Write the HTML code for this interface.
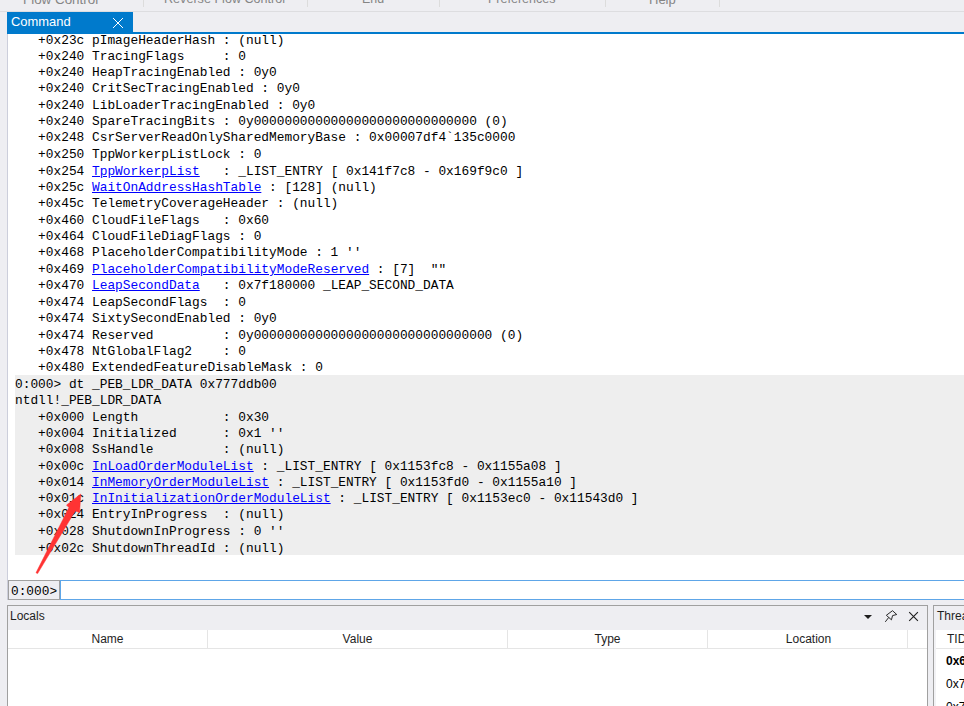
<!DOCTYPE html>
<html><head><meta charset="utf-8">
<style>
*{margin:0;padding:0;box-sizing:border-box}
html,body{width:964px;height:706px;overflow:hidden;background:#EEEEF2;position:relative;font-family:"Liberation Sans",sans-serif}
.abs{position:absolute}
.menu{font-size:13px;color:#858585;white-space:nowrap}
.msep{position:absolute;top:0;width:1px;height:7px;background:#DCDCDC}
#mline{left:0;top:11px;width:964px;height:1px;background:#DDDDE0}
#tab{left:7px;top:12px;width:126px;height:22px;background:#007ACC}
#tabtxt{left:11px;top:14px;color:#fff;font-size:12.95px}
#tabline{left:7px;top:32px;width:957px;height:2px;background:#007ACC}
#cmd{left:7px;top:34px;width:957px;height:566px;background:#fff;border-left:1px solid #CCCEDB}
#hl{left:15px;top:375px;width:949px;height:180px;background:#EEEEEE}
#out{left:15px;top:32px;font-family:"Liberation Mono",monospace;font-size:12.834px;line-height:16px;white-space:pre;color:#000}
.ln{position:absolute;left:0;white-space:pre}
#out a{color:#0000FF;text-decoration:underline}
#pr{left:8px;top:580px;width:52px;height:20px;background:#EEEEF2;border:1px solid #A0A0A0;font-family:"Liberation Mono",monospace;font-size:12.8px;line-height:22px;padding-left:2px;color:#000}
#inp{left:60px;top:580px;width:904px;height:20px;background:#fff;border:1px solid #5EA6E8;border-right:none}
#loc{left:7px;top:605px;width:921px;height:101px;background:#fff;border:1px solid #A0A0A0;border-bottom:none}
#lochd{left:0;top:0;width:919px;height:24px;background:#EEEEF2}
#loctxt{left:2px;top:3px;font-size:12px;color:#1E1E1E}
#colhd{left:0;top:24px;width:919px;height:19px;border-bottom:1px solid #E5E5E5}
.col{position:absolute;top:0;height:18px;font-size:12px;color:#1E1E1E;text-align:center;line-height:18px}
.csep{position:absolute;top:0;width:1px;height:18px;background:#E5E5E5}
#thr{left:933px;top:605px;width:31px;height:101px;background:#fff;border:1px solid #A0A0A0;border-right:none;border-bottom:none}
</style></head><body>
<div class="abs menu" style="left:23px;top:-8px;font-size:13.4px">Flow Control</div>
<div class="msep" style="left:143px"></div>
<div class="abs menu" style="left:164px;top:-8px;font-size:12.6px">Reverse Flow Control</div>
<div class="msep" style="left:307px"></div>
<div class="abs menu" style="left:362px;top:-8px;font-size:12.4px">End</div>
<div class="msep" style="left:439px"></div>
<div class="abs menu" style="left:488px;top:-8px;font-size:12.5px">Preferences</div>
<div class="msep" style="left:605px"></div>
<div class="abs menu" style="left:649px;top:-8px">Help</div>
<div class="msep" style="left:719px"></div>
<div class="abs" id="mline"></div>
<div class="abs" id="tab"></div>
<div class="abs" id="tabtxt">Command</div>
<svg class="abs" style="left:112px;top:17px" width="12" height="12"><path d="M1 1L11 11M11 1L1 11" stroke="#fff" stroke-width="1"/></svg>
<div class="abs" id="tabline"></div>
<div class="abs" id="cmd"></div>
<div class="abs" id="hl"></div>
<div class="abs" id="out">
<div class="ln" style="top:1px">   +0x23c pImageHeaderHash : (null)</div>
<div class="ln" style="top:17px">   +0x240 TracingFlags     : 0</div>
<div class="ln" style="top:33px">   +0x240 HeapTracingEnabled : 0y0</div>
<div class="ln" style="top:49px">   +0x240 CritSecTracingEnabled : 0y0</div>
<div class="ln" style="top:66px">   +0x240 LibLoaderTracingEnabled : 0y0</div>
<div class="ln" style="top:82px">   +0x240 SpareTracingBits : 0y00000000000000000000000000000 (0)</div>
<div class="ln" style="top:98px">   +0x248 CsrServerReadOnlySharedMemoryBase : 0x00007df4`135c0000</div>
<div class="ln" style="top:115px">   +0x250 TppWorkerpListLock : 0</div>
<div class="ln" style="top:132px">   +0x254 <a>TppWorkerpList</a>   : _LIST_ENTRY [ 0x141f7c8 - 0x169f9c0 ]</div>
<div class="ln" style="top:148px">   +0x25c <a>WaitOnAddressHashTable</a> : [128] (null)</div>
<div class="ln" style="top:164px">   +0x45c TelemetryCoverageHeader : (null)</div>
<div class="ln" style="top:181px">   +0x460 CloudFileFlags   : 0x60</div>
<div class="ln" style="top:197px">   +0x464 CloudFileDiagFlags : 0</div>
<div class="ln" style="top:213px">   +0x468 PlaceholderCompatibilityMode : 1 ''</div>
<div class="ln" style="top:230px">   +0x469 <a>PlaceholderCompatibilityModeReserved</a> : [7]  ""</div>
<div class="ln" style="top:246px">   +0x470 <a>LeapSecondData</a>   : 0x7f180000 _LEAP_SECOND_DATA</div>
<div class="ln" style="top:263px">   +0x474 LeapSecondFlags  : 0</div>
<div class="ln" style="top:279px">   +0x474 SixtySecondEnabled : 0y0</div>
<div class="ln" style="top:296px">   +0x474 Reserved         : 0y0000000000000000000000000000000 (0)</div>
<div class="ln" style="top:312px">   +0x478 NtGlobalFlag2    : 0</div>
<div class="ln" style="top:328px">   +0x480 ExtendedFeatureDisableMask : 0</div>
<div class="ln" style="top:345px">0:000> dt _PEB_LDR_DATA 0x777ddb00</div>
<div class="ln" style="top:361px">ntdll!_PEB_LDR_DATA</div>
<div class="ln" style="top:378px">   +0x000 Length           : 0x30</div>
<div class="ln" style="top:394px">   +0x004 Initialized      : 0x1 ''</div>
<div class="ln" style="top:410px">   +0x008 SsHandle         : (null)</div>
<div class="ln" style="top:427px">   +0x00c <a>InLoadOrderModuleList</a> : _LIST_ENTRY [ 0x1153fc8 - 0x1155a08 ]</div>
<div class="ln" style="top:443px">   +0x014 <a>InMemoryOrderModuleList</a> : _LIST_ENTRY [ 0x1153fd0 - 0x1155a10 ]</div>
<div class="ln" style="top:459px">   +0x01c <a>InInitializationOrderModuleList</a> : _LIST_ENTRY [ 0x1153ec0 - 0x11543d0 ]</div>
<div class="ln" style="top:475px">   +0x024 EntryInProgress  : (null)</div>
<div class="ln" style="top:492px">   +0x028 ShutdownInProgress : 0 ''</div>
<div class="ln" style="top:509px">   +0x02c ShutdownThreadId : (null)</div>
</div>
<div class="abs" id="pr">0:000&gt;</div>
<div class="abs" id="inp"></div>
<div class="abs" id="loc">
 <div class="abs" id="lochd"><div class="abs" id="loctxt">Locals</div></div>
 <div class="abs" id="colhd">
  <div class="col" style="left:0;width:199px">Name</div>
  <div class="csep" style="left:199px"></div>
  <div class="col" style="left:200px;width:299px">Value</div>
  <div class="csep" style="left:499px"></div>
  <div class="col" style="left:500px;width:199px">Type</div>
  <div class="csep" style="left:699px"></div>
  <div class="col" style="left:701px;width:199px">Location</div>
  <div class="csep" style="left:899px"></div>
 </div>
</div>
<div class="abs" id="thr">
 <div class="abs" style="left:0;top:0;width:30px;height:24px;background:#EEEEF2"></div>
 <div class="abs" style="left:0;top:24px;width:2px;height:77px;background:#F2F2F5"></div>
 <div class="abs" style="left:3px;top:3px;font-size:12px;color:#1E1E1E;white-space:nowrap">Threads</div>
 <div class="abs" style="left:2px;top:42px;width:30px;height:1px;background:#E5E5E5"></div>
 <div class="abs" style="left:13px;top:24px;font-size:12px;color:#1E1E1E;line-height:18px">TID</div>
 <div class="abs" style="left:12px;top:46px;font-size:12px;color:#000;font-weight:bold;line-height:18px;white-space:nowrap">0x6</div>
 <div class="abs" style="left:12px;top:69px;font-size:12px;color:#000;line-height:18px;white-space:nowrap">0x7</div>
 <div class="abs" style="left:12px;top:92px;font-size:12px;color:#000;line-height:18px;white-space:nowrap">0x7</div>
</div>
<svg class="abs" style="left:860px;top:606px" width="64" height="22">
 <path d="M4 9H12L8 13Z" fill="#1E1E1E"/>
 <g transform="translate(28.9,11.55) rotate(45)" fill="none" stroke="#1E1E1E" stroke-width="0.9">
  <path d="M-2.3,-7.4L3.4,-7.7L1.2,-4L3.4,-0.2L-3.4,0.2Z" stroke-linejoin="miter"/>
  <path d="M-0.2,0.1L0.5,5.6"/>
 </g>
 <path d="M49.2 6.2L57.9 14.8M57.9 6.2L49.2 14.8" stroke="#1E1E1E" stroke-width="1.1"/>
</svg>
<svg class="abs" style="left:0;top:0" width="964" height="706"><polygon points="80.8,494 79.6,512.5 75.2,511 37.6,573.6 36.0,572.8 68.9,507.6 66.5,505" fill="#FF3333" stroke="#FF3333" stroke-width="0.5" stroke-linejoin="round"/></svg>
</body></html>
